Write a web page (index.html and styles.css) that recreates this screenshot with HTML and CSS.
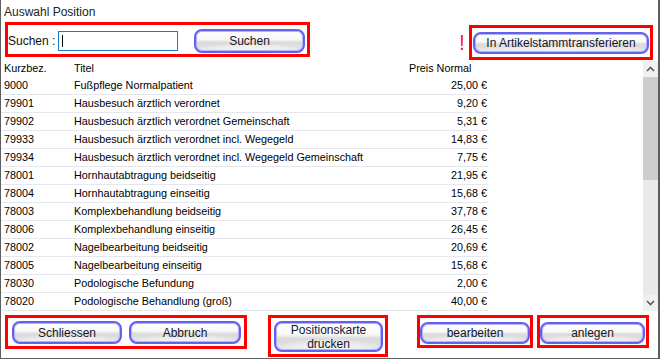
FILE: index.html
```html
<!DOCTYPE html>
<html lang="de">
<head>
    <meta charset="UTF-8">
    <title>Auswahl Position</title>
    <link rel="stylesheet" href="styles.css">
</head>
<body>

<div class="window">
    <div class="title">Auswahl Position</div>

    <div class="toolbar">
        <div class="hl search-hl">
            <span class="search-label">Suchen :</span>
            <div class="field"><span class="caret"></span></div>
            <button class="btn btn-search">Suchen</button>
        </div>
        <div class="transfer">
            <span class="alert">!</span>
            <div class="hl transfer-hl">
                <button class="btn btn-transfer">In Artikelstammtransferieren</button>
            </div>
        </div>
    </div>

    <div class="list">
        <div class="grid">
            <div class="row head">
                <span>Kurzbez.</span><span>Titel</span><span>Preis Normal</span>
            </div>
            <div class="row"><span>9000</span><span>Fußpflege Normalpatient</span><span class="price">25,00 €</span></div>
            <div class="row"><span>79901</span><span>Hausbesuch ärztlich verordnet</span><span class="price">9,20 €</span></div>
            <div class="row"><span>79902</span><span>Hausbesuch ärztlich verordnet Gemeinschaft</span><span class="price">5,31 €</span></div>
            <div class="row"><span>79933</span><span>Hausbesuch ärztlich verordnet incl. Wegegeld</span><span class="price">14,83 €</span></div>
            <div class="row"><span>79934</span><span>Hausbesuch ärztlich verordnet incl. Wegegeld Gemeinschaft</span><span class="price">7,75 €</span></div>
            <div class="row"><span>78001</span><span>Hornhautabtragung beidseitig</span><span class="price">21,95 €</span></div>
            <div class="row"><span>78004</span><span>Hornhautabtragung einseitig</span><span class="price">15,68 €</span></div>
            <div class="row"><span>78003</span><span>Komplexbehandlung beidseitig</span><span class="price">37,78 €</span></div>
            <div class="row"><span>78006</span><span>Komplexbehandlung einseitig</span><span class="price">26,45 €</span></div>
            <div class="row"><span>78002</span><span>Nagelbearbeitung beidseitig</span><span class="price">20,69 €</span></div>
            <div class="row"><span>78005</span><span>Nagelbearbeitung einseitig</span><span class="price">15,68 €</span></div>
            <div class="row"><span>78030</span><span>Podologische Befundung</span><span class="price">2,00 €</span></div>
            <div class="row"><span>78020</span><span>Podologische Behandlung (groß)</span><span class="price">40,00 €</span></div>
        </div>

        <div class="scrollbar">
            <div class="arrow">
                <svg width="9" height="6" viewBox="0 0 9 6"><polyline points="1,5 4.5,1.5 8,5" fill="none" stroke="#5a5a5a" stroke-width="1.6"/></svg>
            </div>
            <div class="thumb"></div>
            <div class="track"></div>
            <div class="arrow">
                <svg width="9" height="6" viewBox="0 0 9 6"><polyline points="1,1 4.5,4.5 8,1" fill="none" stroke="#5a5a5a" stroke-width="1.6"/></svg>
            </div>
        </div>
    </div>

    <div class="footer">
        <div class="hl hl-a">
            <button class="btn btn-close">Schliessen</button>
            <button class="btn btn-cancel">Abbruch</button>
        </div>
        <div class="hl hl-b">
            <button class="btn btn-print">Positionskarte<br>drucken</button>
        </div>
        <div class="hl hl-c">
            <button class="btn btn-edit">bearbeiten</button>
        </div>
        <div class="hl hl-d">
            <button class="btn btn-new">anlegen</button>
        </div>
    </div>
</div>

</body>
</html>
```

FILE: styles.css
```css
body {
    margin: 0;
    font-family: "Liberation Sans", Arial, sans-serif;
    background-color: #fff;
}
.window {
    width: 660px;
    height: 359px;
    box-sizing: border-box;
    border-left: 1px solid #5e5e5e;
    border-right: 2px solid #5e5e5e;
    border-bottom: 1px solid #5e5e5e;
    display: flex;
    flex-direction: column;
    background-color: #fff;
}
.title {
    height: 22px;
    box-sizing: border-box;
    padding: 5px 0 0 3px;
    font-size: 12px;
    line-height: 14px;
    color: #222;
}

/* red highlight boxes */
.hl {
    border: 3px solid #f00;
    box-sizing: border-box;
    display: flex;
}

/* buttons */
.btn {
    box-sizing: border-box;
    padding: 0;
    border: 2px solid #6262ee;
    border-radius: 8px;
    box-shadow: inset 0 0 0 1px #b4b4fa;
    background:
        radial-gradient(ellipse 75% 55% at 50% 100%, #f4f4f4 0%, #eeeeee 45%, rgba(238,238,238,0) 75%),
        linear-gradient(to bottom, #ffffff 0%, #f8f8f8 42%, #dadada 58%, #e3e3e3 100%);
    font-family: "Liberation Sans", Arial, sans-serif;
    font-size: 12px;
    line-height: 14px;
    color: #16162a;
    text-align: center;
}

.toolbar {
    height: 38px;
    display: flex;
    align-items: flex-start;
    padding-left: 4px;
}
.search-hl {
    width: 305px;
    height: 35px;
    align-items: center;
    padding-top: 3px;
}
.search-label {
    width: 50px;
    font-size: 12px;
    color: #111;
}
.field {
    width: 120px;
    height: 20px;
    box-sizing: border-box;
    border: 1px solid #1a78c8;
    background-color: #fff;
    padding: 3px 0 0 3px;
}
.caret {
    display: block;
    width: 1px;
    height: 12px;
    background-color: #000;
}
.btn-search {
    width: 111px;
    height: 24px;
    margin-left: 16px;
}
.transfer {
    margin-left: auto;
    margin-right: 5px;
    margin-top: 3px;
    display: flex;
    align-items: center;
}
.alert {
    color: #f00;
    font-size: 22px;
    line-height: 20px;
    margin-right: 4px;
    transform: scaleX(0.8);
}
.transfer-hl {
    width: 184px;
    height: 35px;
    justify-content: center;
    padding-top: 4px;
}
.btn-transfer {
    width: 176px;
    height: 22px;
}

/* list */
.list {
    height: 251px;
    display: flex;
}
.grid {
    width: 488px;
}
.row {
    display: grid;
    grid-template-columns: 70px 335px 1fr;
    height: 18px;
    box-sizing: border-box;
    padding-left: 3px;
    border-bottom: 1px solid #e6e6ef;
    font-size: 10.8px;
    line-height: 17px;
    color: #000;
    white-space: nowrap;
}
.row.head {
    height: 17px;
    border-bottom: none;
}
.price {
    text-align: right;
    padding-right: 2px;
}
.scrollbar {
    margin-left: auto;
    margin-top: 1px;
    width: 15px;
    display: flex;
    flex-direction: column;
    background-color: #e9e9e9;
}
.arrow {
    height: 16px;
    background-color: #f0f0f0;
    display: flex;
    align-items: center;
    justify-content: center;
}
.thumb {
    height: 103px;
    background-color: #cdcdcd;
}
.track {
    flex: 1;
}

/* footer */
.footer {
    height: 47px;
    display: flex;
    align-items: flex-start;
    padding: 4px 0 0 4px;
    box-sizing: border-box;
}
.hl-a {
    width: 242px;
    height: 34px;
    padding: 3px 0 0 4px;
    gap: 7px;
}
.btn-close {
    width: 110px;
    height: 23px;
}
.btn-cancel {
    width: 112px;
    height: 23px;
}
.hl-b {
    width: 120px;
    height: 42px;
    margin-left: 21px;
    padding: 3px 0 0 3px;
}
.btn-print {
    width: 109px;
    height: 31px;
}
.hl-c {
    width: 116px;
    height: 33px;
    margin-left: 29px;
    padding: 4px 0 0 0;
}
.btn-edit {
    width: 110px;
    height: 22px;
}
.hl-d {
    width: 112px;
    height: 33px;
    margin-left: 4px;
    padding: 4px 0 0 0;
}
.btn-new {
    width: 105px;
    height: 22px;
}
```
